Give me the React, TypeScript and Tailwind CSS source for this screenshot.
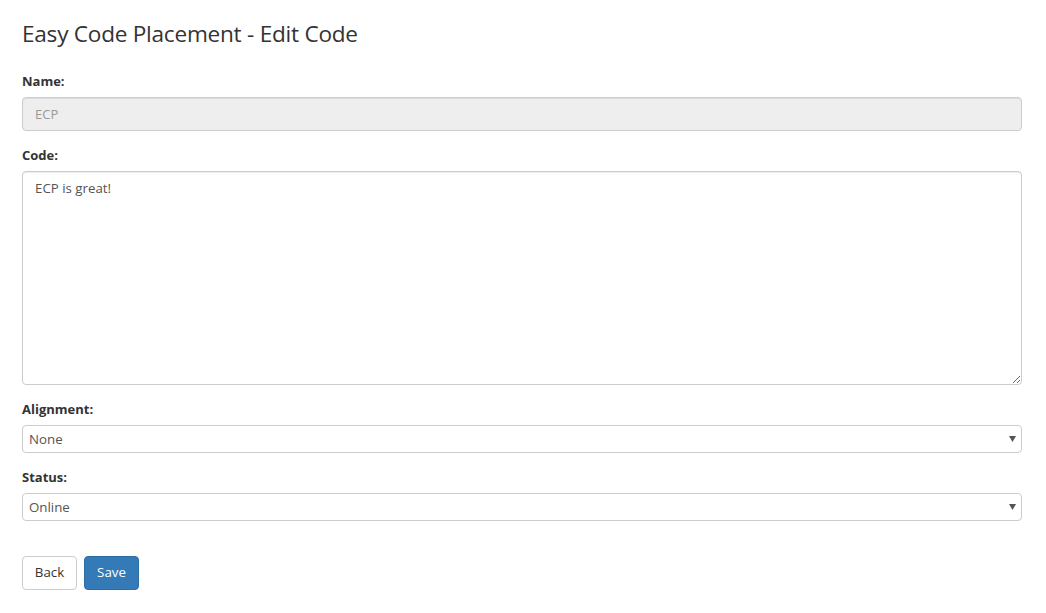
export default function App() {
  return (
    <div className="min-h-screen bg-white px-[22px] pt-[19px] text-[#333] [font-family:'Open_Sans','Noto_Sans',sans-serif]">
      <h1 className="text-[22.6px] leading-[30px] font-normal tracking-[-0.25px]">Easy Code Placement - Edit Code</h1>

      <form className="mt-[23px] w-[1000px]">
        {/* Name (read only) */}
        <div className="mb-[15px]">
          <label className="block text-[13px] font-bold leading-[18px] mb-[7px]">Name:</label>
          <input
            readOnly
            value="ECP"
            className="block h-[34px] w-full rounded-[4px] border border-[#ccc] bg-[#eee] px-[12px] text-[13px] text-[#999] shadow-[inset_0_1px_1px_rgba(0,0,0,0.075)] outline-none"
          />
        </div>

        {/* Code */}
        <div className="mb-[15px]">
          <label className="block text-[13px] font-bold leading-[18px] mb-[7px]">Code:</label>
          <textarea
            defaultValue="ECP is great!"
            className="block h-[214px] w-full rounded-[4px] border border-[#ccc] bg-white px-[12px] py-[6px] text-[13.3px] leading-[20px] text-[#555] shadow-[inset_0_1px_1px_rgba(0,0,0,0.075)] outline-none"
          />
        </div>

        {/* Alignment */}
        <div className="mb-[15px]">
          <label className="block text-[13px] font-bold leading-[18px] mb-[7px]">Alignment:</label>
          <Select value="None" />
        </div>

        {/* Status */}
        <div className="mb-[35px]">
          <label className="block text-[13px] font-bold leading-[18px] mb-[7px]">Status:</label>
          <Select value="Online" />
        </div>

        <div className="flex gap-[7px]">
          <button type="button" className="h-[34px] w-[55px] rounded-[4px] border border-[#ccc] bg-white text-[13.3px] text-[#333]">
            Back
          </button>
          <button type="button" className="h-[34px] w-[55px] rounded-[4px] border border-[#2e6da4] bg-[#337ab7] text-[13.3px] text-white">
            Save
          </button>
        </div>
      </form>
    </div>
  )
}

function Select({ value }: { value: string }) {
  return (
    <div className="relative h-[28px] w-full rounded-[4px] border border-[#ccc] bg-white">
      <span className="absolute left-[6px] top-[4px] text-[13.3px] leading-[18px] text-[#555]">{value}</span>
      <svg className="absolute right-[5px] top-[10px]" width="7" height="6" viewBox="0 0 7 6">
        <path d="M0 0h7L3.5 6z" fill="#555" />
      </svg>
    </div>
  )
}
